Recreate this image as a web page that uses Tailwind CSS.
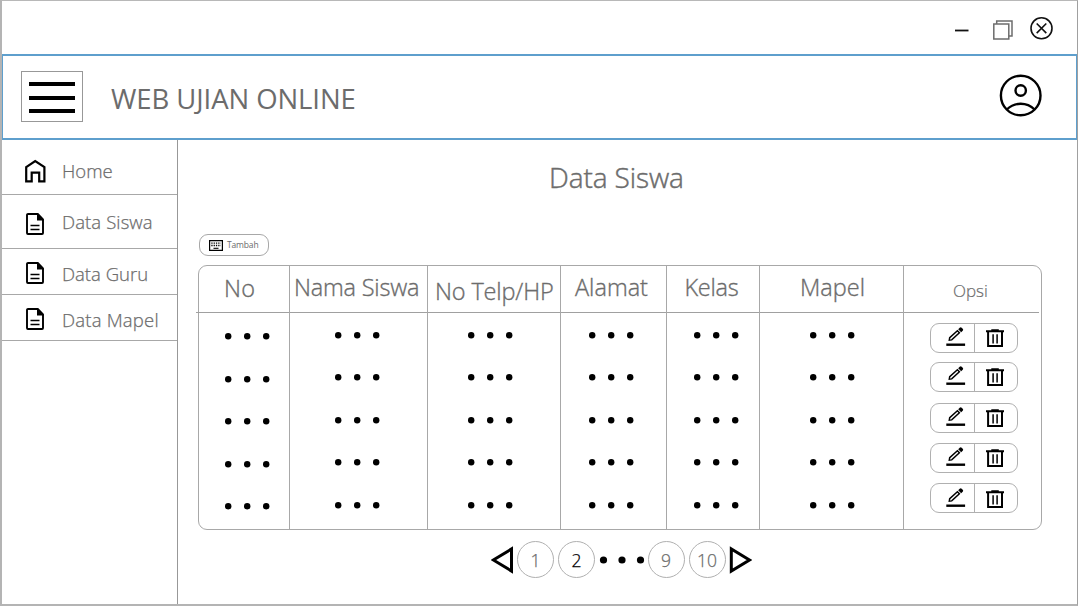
<!DOCTYPE html>
<html lang="id">
<head>
<meta charset="utf-8">
<title>Web Ujian Online</title>
<script src="https://cdn.jsdelivr.net/npm/@tailwindcss/browser@4"></script>
</head>
<body class="bg-white">
<svg class="hidden">
  <symbol id="dots" viewBox="0 0 45 7"><circle cx="3.200" cy="3.200" r="3.200"/><circle cx="22.200" cy="3.200" r="3.200"/><circle cx="41.200" cy="3.200" r="3.200"/></symbol>
  <symbol id="doc" viewBox="0 0 18 22"><path d="M2 1h9.800l5.200 5.400V20a1 1 0 0 1-1 1H2a1 1 0 0 1-1-1V2a1 1 0 0 1 1-1z" fill="none" stroke="#000" stroke-width="1.900"/><path d="M11 .5L17.800 7.400H11z"/><path d="M4.500 12.500h9M4.500 16.500h9" stroke="#000" stroke-width="1.500"/></symbol>
  <symbol id="edit" viewBox="0 0 20 20"><path d="M.3 17.700h18.800" stroke="#000" stroke-width="2.400"/><path d="M3.300 13.200l.4-2.500 7.700-7 2 2.100-7.700 7.100z" fill="none" stroke="#000" stroke-width="1.500"/><path d="M12.200 2.300l1.500-1.500a1.500 1.500 0 0 1 2 0l1 1a1.500 1.500 0 0 1 0 2l-1.500 1.500z"/></symbol>
  <symbol id="trash" viewBox="0 0 18 19"><path d="M0 2.300h18M5.300 1.200h7.500M2.100 2.500v14.600h13.900V2.500" fill="none" stroke="#000" stroke-width="2"/><path d="M7.100 5.200v9.300M11.100 5.200v9.300" stroke="#000" stroke-width="1.500"/></symbol>
</svg>
<div class="flex h-[606px] w-[1078px] flex-col overflow-hidden border-t border-r border-b-2 border-l-2 border-t-[#b8b8b8] border-r-[#a0a0a0] border-b-[#b4b4b4] border-l-[#b4b4b4] font-['Open_Sans',sans-serif] text-[#6c6c6c]">
  <div class="flex h-[53px] shrink-0 items-start justify-end pr-[23px]">
    <svg class="mt-[28px] mr-[24px]" width="14" height="3"><path d="M0 1.500h13.500" stroke="#111" stroke-width="1.800"/></svg>
    <svg class="mt-[18px] mr-[17px]" width="20" height="21" fill="#fff" stroke="#6c6c6c" stroke-width="1.500"><path d="M3.700 1.900h15.300v15h-15.300z"/><path d="M.8 4.900h15v15h-15z"/></svg>
    <svg class="mt-[15px]" width="24" height="24" fill="none" stroke="#111" stroke-width="1.600"><circle cx="11.500" cy="12.300" r="10.500"/><path d="M6.700 7.500l9.600 9.600M16.300 7.500l-9.600 9.600"/></svg>
  </div>
  <header class="flex h-[86px] shrink-0 items-start border-x border-y-2 border-[#5e9fcd] pr-[34px]">
    <div class="mt-[15px] ml-[18px] flex h-[51px] w-[62px] flex-col items-center gap-[9.500px] border border-[#989898] pt-[10px]">
      <i class="h-[4px] w-[46px] shrink-0 bg-black"></i><i class="h-[4px] w-[46px] shrink-0 bg-black"></i><i class="h-[4px] w-[46px] shrink-0 bg-black"></i>
    </div>
    <h1 class="mt-[29px] ml-[28px] text-[27.500px] leading-[28px] tracking-[-0.080px] whitespace-nowrap">WEB UJIAN ONLINE</h1>
    <svg class="mt-[18px] ml-auto" width="43" height="43" fill="none" stroke="#000" stroke-width="2.400"><circle cx="21.700" cy="21.500" r="19.800"/><circle cx="21.700" cy="16.500" r="5.200"/><path d="M7.800 35.500q5.900-5.800 13.900-5.800t13.900 5.800"/></svg>
  </header>
  <div class="flex min-h-0 flex-1">
    <nav class="w-[175.500px] shrink-0 border-r border-[#989898] text-[18.500px] leading-5 font-light [-webkit-text-stroke:0.250px_#6c6c6c] whitespace-nowrap">
      <a class="flex h-[55px] items-start border-b border-[#a8a8a8] pl-[23px]"><svg class="mt-[19px] mr-[16px]" width="21" height="24" fill="none" stroke="#000" stroke-width="2.200"><path d="M1.200 8.200L10.200 2l9.200 6.200v14.200h-5.200v-8.800h-7.500v8.800H1.200z"/></svg><span class="mt-[21px]">Home</span></a>
      <a class="flex h-[54px] items-start border-b border-[#a8a8a8] pl-[24px]"><svg class="mt-[18px] mr-[18px]" width="18" height="22"><use href="#doc"/></svg><span class="mt-[17px] tracking-[0.100px]">Data Siswa</span></a>
      <a class="flex h-[46px] items-start border-b border-[#a8a8a8] pl-[24px]"><svg class="mt-[13px] mr-[18px]" width="18" height="22"><use href="#doc"/></svg><span class="mt-[15px]">Data Guru</span></a>
      <a class="flex h-[46px] items-start border-b border-[#a8a8a8] pl-[24px]"><svg class="mt-[13px] mr-[18px]" width="18" height="22"><use href="#doc"/></svg><span class="mt-[15px] tracking-[0.200px]">Data Mapel</span></a>
    </nav>
    <main class="flex flex-1 flex-col items-start">
      <h2 class="mt-[22px] ml-[371.500px] text-[28px] leading-[30px] font-light tracking-[-0.100px] whitespace-nowrap [-webkit-text-stroke:0.450px_#6c6c6c]">Data Siswa</h2>
      <button class="mt-[42px] ml-[21.500px] flex h-[22px] w-[70px] items-center rounded-[9px] border border-[#a8a8a8] pl-[9px] text-[8.500px] leading-none"><svg width="14" height="11" fill="none" stroke="#000"><path d="M.6.6h12.800v9.800H.6z" stroke-width="1.200"/><path d="M2.300 3.200h9.500M2.300 5.500h9.500" stroke-width="1.300" stroke-dasharray="1.300 1"/><path d="M4.500 8.300h5" stroke-width="1.100"/></svg><span class="ml-[4px] tracking-[-0.150px]">Tambah</span></button>
      <section class="mt-[9px] ml-[20.500px] flex h-[265px] w-[844px] rounded-[9px] border border-[#a8a8a8] text-[23.500px] leading-6 font-light [-webkit-text-stroke:0.350px_#6c6c6c] whitespace-nowrap">
        <div class="-ml-[3px] w-[94px] shrink-0 border-r border-[#a8a8a8]">
          <div class="h-[47px] border-b border-[#a0a0a0] pt-[10px] pl-[28px] tracking-[0.300px]">No</div>
          <div class="flex flex-col gap-[35.600px] pt-[20px] pl-[28.500px]"><svg width="45" height="7"><use href="#dots"/></svg><svg width="45" height="7"><use href="#dots"/></svg><svg width="45" height="7"><use href="#dots"/></svg><svg width="45" height="7"><use href="#dots"/></svg><svg width="45" height="7"><use href="#dots"/></svg></div>
        </div>
        <div class="w-[138px] shrink-0 border-r border-[#a8a8a8]">
          <div class="h-[47px] border-b border-[#a0a0a0] pt-[9px] pl-[4px] tracking-[-0.200px]">Nama Siswa</div>
          <div class="flex flex-col gap-[35.600px] pt-[18.500px] pl-[44.500px]"><svg width="45" height="7"><use href="#dots"/></svg><svg width="45" height="7"><use href="#dots"/></svg><svg width="45" height="7"><use href="#dots"/></svg><svg width="45" height="7"><use href="#dots"/></svg><svg width="45" height="7"><use href="#dots"/></svg></div>
        </div>
        <div class="w-[133px] shrink-0 border-r border-[#a8a8a8]">
          <div class="h-[47px] border-b border-[#a0a0a0] pt-[13px] pl-[7px] tracking-[-0.150px]">No Telp/HP</div>
          <div class="flex flex-col gap-[35.600px] pt-[18.500px] pl-[40px]"><svg width="45" height="7"><use href="#dots"/></svg><svg width="45" height="7"><use href="#dots"/></svg><svg width="45" height="7"><use href="#dots"/></svg><svg width="45" height="7"><use href="#dots"/></svg><svg width="45" height="7"><use href="#dots"/></svg></div>
        </div>
        <div class="w-[106px] shrink-0 border-r border-[#a8a8a8]">
          <div class="h-[47px] border-b border-[#a0a0a0] pt-[9px] pl-[14px]">Alamat</div>
          <div class="flex flex-col gap-[35.600px] pt-[18.500px] pl-[27.500px]"><svg width="45" height="7"><use href="#dots"/></svg><svg width="45" height="7"><use href="#dots"/></svg><svg width="45" height="7"><use href="#dots"/></svg><svg width="45" height="7"><use href="#dots"/></svg><svg width="45" height="7"><use href="#dots"/></svg></div>
        </div>
        <div class="w-[93px] shrink-0 border-r border-[#a8a8a8]">
          <div class="h-[47px] border-b border-[#a0a0a0] pt-[9px] pl-[17.500px] tracking-[-0.300px]">Kelas</div>
          <div class="flex flex-col gap-[35.600px] pt-[18.500px] pl-[27px]"><svg width="45" height="7"><use href="#dots"/></svg><svg width="45" height="7"><use href="#dots"/></svg><svg width="45" height="7"><use href="#dots"/></svg><svg width="45" height="7"><use href="#dots"/></svg><svg width="45" height="7"><use href="#dots"/></svg></div>
        </div>
        <div class="w-[144px] shrink-0 border-r border-[#a8a8a8]">
          <div class="h-[47px] border-b border-[#a0a0a0] pt-[9px] pl-[40px]">Mapel</div>
          <div class="flex flex-col gap-[35.600px] pt-[18.500px] pl-[50px]"><svg width="45" height="7"><use href="#dots"/></svg><svg width="45" height="7"><use href="#dots"/></svg><svg width="45" height="7"><use href="#dots"/></svg><svg width="45" height="7"><use href="#dots"/></svg><svg width="45" height="7"><use href="#dots"/></svg></div>
        </div>
        <div class="w-[135px] shrink-0">
          <div class="h-[47px] border-b border-[#a0a0a0] pt-[13px] pl-[49px] text-[17px] [-webkit-text-stroke:0.200px_#6c6c6c]">Opsi</div>
          <div class="flex flex-col pt-[10px] pl-[26px]">
            <div class="mb-[9px] flex h-[30px] w-[88px] rounded-[9px] border border-[#b0b0b0]"><span class="w-[44px] border-r border-[#b0b0b0] pt-[3px] pl-[15px]"><svg width="20" height="20"><use href="#edit"/></svg></span><span class="pt-[5px] pl-[11px]"><svg width="18" height="19"><use href="#trash"/></svg></span></div>
            <div class="mb-[11px] flex h-[30px] w-[88px] rounded-[9px] border border-[#b0b0b0]"><span class="w-[44px] border-r border-[#b0b0b0] pt-[3px] pl-[15px]"><svg width="20" height="20"><use href="#edit"/></svg></span><span class="pt-[5px] pl-[11px]"><svg width="18" height="19"><use href="#trash"/></svg></span></div>
            <div class="mb-[10px] flex h-[30px] w-[88px] rounded-[9px] border border-[#b0b0b0]"><span class="w-[44px] border-r border-[#b0b0b0] pt-[3px] pl-[15px]"><svg width="20" height="20"><use href="#edit"/></svg></span><span class="pt-[5px] pl-[11px]"><svg width="18" height="19"><use href="#trash"/></svg></span></div>
            <div class="mb-[10px] flex h-[30px] w-[88px] rounded-[9px] border border-[#b0b0b0]"><span class="w-[44px] border-r border-[#b0b0b0] pt-[3px] pl-[15px]"><svg width="20" height="20"><use href="#edit"/></svg></span><span class="pt-[5px] pl-[11px]"><svg width="18" height="19"><use href="#trash"/></svg></span></div>
            <div class="flex h-[30px] w-[88px] rounded-[9px] border border-[#b0b0b0]"><span class="w-[44px] border-r border-[#b0b0b0] pt-[3.500px] pl-[15px]"><svg width="20" height="20"><use href="#edit"/></svg></span><span class="pt-[5.500px] pl-[11px]"><svg width="18" height="19"><use href="#trash"/></svg></span></div>
          </div>
        </div>
      </section>
      <div class="mt-[11px] ml-[313.500px] flex h-[37px] items-center text-[17.500px] leading-none font-light">
        <svg width="23" height="28" fill="none" stroke="#000" stroke-width="3"><path d="M2.300 14L20.500 3v22z"/></svg>
        <span class="ml-[3px] flex size-[37px] items-center justify-center rounded-full border border-[#b0b0b0] pt-0.5 [-webkit-text-stroke:0.250px_#6c6c6c]">1</span>
        <span class="ml-[4px] flex size-[37px] items-center justify-center rounded-full border border-[#b0b0b0] pt-0.5 text-black [-webkit-text-stroke:0.250px_#000]">2</span>
        <svg class="ml-[4px]" width="46" height="8"><circle cx="4.500" cy="4" r="3.600"/><circle cx="23" cy="4" r="3.600"/><circle cx="41.500" cy="4" r="3.600"/></svg>
        <span class="ml-[2.500px] flex size-[37px] items-center justify-center rounded-full border border-[#b0b0b0] pt-0.5 [-webkit-text-stroke:0.250px_#6c6c6c]">9</span>
        <span class="ml-[4px] flex size-[37px] items-center justify-center rounded-full border border-[#b0b0b0] pt-0.5 [-webkit-text-stroke:0.250px_#6c6c6c]">10</span>
        <svg class="ml-[3px]" width="23" height="28" fill="none" stroke="#000" stroke-width="3"><path d="M20.500 14L2.300 3v22z"/></svg>
      </div>
    </main>
  </div>
</div>
</body>
</html>
